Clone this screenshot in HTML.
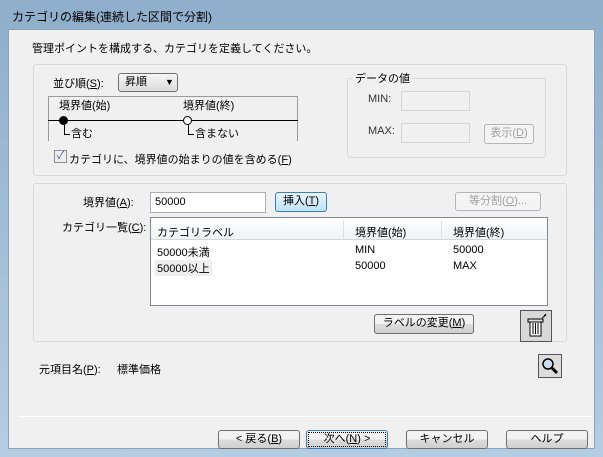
<!DOCTYPE html><html><head><meta charset="utf-8"><style>
*{box-sizing:border-box}
body{margin:0;width:603px;height:457px;overflow:hidden;background:linear-gradient(#8eaecb,#b5cde3);font-family:"Liberation Sans","Noto Sans CJK JP",sans-serif;font-size:11px;color:#000;position:relative}
.a{position:absolute;white-space:nowrap}
.client{position:absolute;left:8px;top:29px;width:587px;height:420px;background:#f0f0f0;border:1px solid #8aa3bd}
.grp{position:absolute;border:1px solid #d8d8d8;border-radius:3px;background:#f0f0f0}
.btn{position:absolute;border:1px solid #707070;border-radius:3px;background:linear-gradient(#f2f2f2 50%,#dddddd 50%,#cfcfcf);text-align:center;line-height:17px;height:19px}
.dis{color:#a0a0a0;border-color:#b5b5b5;background:#f4f4f4}
.edit{position:absolute;background:#fff;border:1px solid #abadb3}
u{text-decoration:underline}
</style></head><body>
<div class="a" style="left:12px;top:8px;font-size:12px">カテゴリの編集(連続した区間で分割)</div>
<div class="client"></div>
<div class="a" style="left:32px;top:40px">管理ポイントを構成する、カテゴリを定義してください。</div>
<div class="grp" style="left:33px;top:64px;width:534px;height:112px"></div>
<div class="a" style="left:53px;top:75px">並び順(<u>S</u>):</div>
<div class="btn" style="left:118px;top:73px;width:60px;background:linear-gradient(#f6f6f6,#dcdcdc);text-align:left;padding-left:6px">昇順 <span style="position:absolute;left:46px;top:0;font-size:9px">▼</span></div>
<div class="a" style="left:48px;top:96px;width:250px;height:45px;border-left:1px solid #999;border-right:1px solid #999;border-top:1px solid #999"></div>
<div class="a" style="left:48px;top:120px;width:250px;height:1px;background:#000"></div>
<div class="a" style="left:59px;top:97px">境界値(始)</div>
<div class="a" style="left:183px;top:97px">境界値(終)</div>
<div class="a" style="left:59px;top:116px;width:9px;height:9px;border-radius:50%;background:#000"></div>
<div class="a" style="left:183px;top:116px;width:9px;height:9px;border-radius:50%;background:#fff;border:1px solid #000"></div>
<div class="a" style="left:64px;top:124px;width:6px;height:11px;border-left:1px solid #000;border-bottom:1px solid #000"></div>
<div class="a" style="left:188px;top:124px;width:6px;height:11px;border-left:1px solid #000;border-bottom:1px solid #000"></div>
<div class="a" style="left:71px;top:125px">含む</div>
<div class="a" style="left:195px;top:125px">含まない</div>
<div class="a" style="left:54px;top:150px;width:13px;height:13px;border:1px solid #8f8f8f;background:#eee;font-size:11px;line-height:11px;text-align:center;color:#4a5f97">✓</div>
<div class="a" style="left:69px;top:151px">カテゴリに、境界値の始まりの値を含める(<u>F</u>)</div>
<div class="grp" style="left:347px;top:78px;width:199px;height:80px"></div>
<div class="a" style="left:353px;top:70px;background:#f0f0f0;padding:0 2px">データの値</div>
<div class="a" style="left:368px;top:93px;color:#333">MIN:</div>
<div class="edit" style="left:401px;top:91px;width:69px;height:20px;background:#f0f0f0;border-color:#d5d5d5"></div>
<div class="a" style="left:368px;top:125px;color:#333">MAX:</div>
<div class="edit" style="left:401px;top:123px;width:69px;height:20px;background:#f0f0f0;border-color:#d5d5d5"></div>
<div class="btn dis" style="left:484px;top:124px;width:50px;height:20px">表示(<u>D</u>)</div>
<div class="grp" style="left:33px;top:183px;width:534px;height:159px"></div>
<div class="a" style="left:83px;top:194px">境界値(<u>A</u>):</div>
<div class="edit" style="left:150px;top:192px;width:116px;height:21px;padding:3px 4px">50000</div>
<div class="btn" style="left:275px;top:192px;width:52px;height:20px;background:linear-gradient(#e6f4fc,#bfe3f7);border-color:#3c7fb1">挿入(<u>T</u>)</div>
<div class="btn dis" style="left:455px;top:192px;width:86px;height:19px">等分割(<u>O</u>)...</div>
<div class="a" style="left:62px;top:219px">カテゴリ一覧(<u>C</u>):</div>
<div class="edit" style="left:150px;top:217px;width:398px;height:89px;border-color:#828790"></div>
<div class="a" style="left:151px;top:218px;width:396px;height:22px;background:linear-gradient(#fff,#f1f2f4);border-bottom:1px solid #d5d5d5"></div>
<div class="a" style="left:343px;top:220px;width:1px;height:20px;background:#e0e0e0"></div>
<div class="a" style="left:441px;top:220px;width:1px;height:20px;background:#e0e0e0"></div>
<div class="a" style="left:157px;top:224px">カテゴリラベル</div>
<div class="a" style="left:355px;top:224px">境界値(始)</div>
<div class="a" style="left:453px;top:224px">境界値(終)</div>
<div class="a" style="left:157px;top:244px">50000未満</div>
<div class="a" style="left:355px;top:244px">MIN</div>
<div class="a" style="left:453px;top:244px">50000</div>
<div class="a" style="left:155px;top:260px;background:#efefef;padding:0 2px">50000以上</div>
<div class="a" style="left:355px;top:260px">50000</div>
<div class="a" style="left:453px;top:260px">MAX</div>
<div class="btn" style="left:374px;top:314px;width:100px;height:20px">ラベルの変更(<u>M</u>)</div>
<div class="btn" style="left:520px;top:310px;width:32px;height:32px;border-radius:0;border-color:#555;background:#d8d8d8"><svg width="30" height="30" viewBox="0 0 30 30"><rect x="9" y="10" width="11" height="15" fill="#fff" stroke="#000"/><rect x="7" y="8" width="15" height="3" fill="#ddd" stroke="#000"/><path d="M12 12v11M14.5 12v11M17 12v11" stroke="#000"/><path d="M23 5l2 -2M21 7l4 -3" stroke="#000"/></svg></div>
<div class="a" style="left:39px;top:361px">元項目名(<u>P</u>):</div>
<div class="a" style="left:117px;top:361px">標準価格</div>
<div class="btn" style="left:538px;top:354px;width:24px;height:24px;border-radius:0;border-color:#555;background:#dcdcdc"><svg width="22" height="22"><circle cx="9" cy="9" r="5" fill="#cde" stroke="#000" stroke-width="1.5"/><path d="M13 13l5 5" stroke="#000" stroke-width="3"/></svg></div>
<div class="a" style="left:18px;top:416px;width:575px;height:1px;background:#c8c8c8;border-bottom:1px solid #fff"></div>
<div class="btn" style="left:218px;top:430px;width:82px;height:19px">&lt; 戻る(<u>B</u>)</div>
<div class="btn" style="left:306px;top:430px;width:82px;height:19px;border-color:#3c7fb1;outline:1px dotted #000;outline-offset:-3px">次へ(<u>N</u>) &gt;</div>
<div class="btn" style="left:406px;top:430px;width:82px;height:19px">キャンセル</div>
<div class="btn" style="left:506px;top:430px;width:82px;height:19px">ヘルプ</div>
</body></html>
